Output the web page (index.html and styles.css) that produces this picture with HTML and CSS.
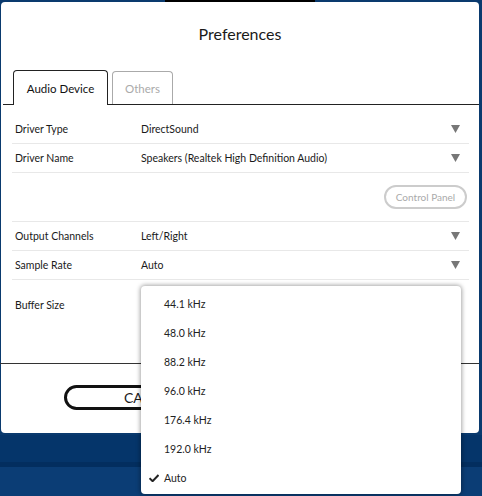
FILE: index.html
```html
<!DOCTYPE html>
<html>
<head>
<meta charset="utf-8">
<link rel="stylesheet" href="styles.css">
</head>
<body>
<div class="topbar"></div>
<div class="dialog">
  <div class="title">Preferences</div>
  <div class="tabs">
    <div class="tab active">Audio Device</div>
    <div class="tab">Others</div>
  </div>
  <div class="content">
    <div class="row">
      <div class="label">Driver Type</div>
      <div class="value">DirectSound</div>
      <svg class="arrow" width="9" height="8" viewBox="0 0 9 8"><path d="M0 0 H9 L4.5 8 Z" fill="#777"/></svg>
    </div>
    <div class="row">
      <div class="label">Driver Name</div>
      <div class="value">Speakers (Realtek High Definition Audio)</div>
      <svg class="arrow" width="9" height="8" viewBox="0 0 9 8"><path d="M0 0 H9 L4.5 8 Z" fill="#777"/></svg>
    </div>
    <div class="row cp">
      <div class="cpbtn">Control Panel</div>
    </div>
    <div class="row">
      <div class="label">Output Channels</div>
      <div class="value">Left/Right</div>
      <svg class="arrow" width="9" height="8" viewBox="0 0 9 8"><path d="M0 0 H9 L4.5 8 Z" fill="#777"/></svg>
    </div>
    <div class="row">
      <div class="label">Sample Rate</div>
      <div class="value">Auto</div>
      <svg class="arrow" width="9" height="8" viewBox="0 0 9 8"><path d="M0 0 H9 L4.5 8 Z" fill="#777"/></svg>
    </div>
    <div class="row last">
      <div class="label">Buffer Size</div>
      <div class="value"></div>
    </div>
  </div>
  <div class="footer">
    <div class="btn">CANCEL</div>
  </div>
</div>
<div class="menu">
  <div class="item">44.1 kHz</div>
  <div class="item">48.0 kHz</div>
  <div class="item">88.2 kHz</div>
  <div class="item">96.0 kHz</div>
  <div class="item">176.4 kHz</div>
  <div class="item">192.0 kHz</div>
  <div class="item checked"><svg class="check" width="10" height="8" viewBox="0 0 10 8"><path d="M0.5 4.2 L3.6 7.2 L9.5 1" fill="none" stroke="#222" stroke-width="2"/></svg>Auto</div>
</div>
</body>
</html>
```
FILE: styles.css
```css
html, body {
  margin: 0;
  padding: 0;
}
body {
  width: 482px;
  height: 496px;
  overflow: hidden;
  position: relative;
  font-family: "Lato", "Open Sans", sans-serif;
  color: #1a1a1a;
  background: linear-gradient(to bottom, #0a3a6e 0, #0a3a6e 435px, #05356a 435px, #05356a 462px, #032e5f 462px, #032e5f 467px, #0b3d75 467px, #0b3d75 496px);
}
.topbar {
  position: absolute;
  left: 165px;
  top: 0;
  width: 150px;
  height: 2px;
  background: #000;
}
.dialog {
  margin: 2px 3px 0 1px;
  height: 431px;
  background: #fff;
  border-radius: 4px;
  display: flex;
  flex-direction: column;
}
.title {
  height: 64px;
  display: flex;
  align-items: center;
  justify-content: center;
  font-size: 16px;
  padding-bottom: 2px;
  box-sizing: border-box;
  margin-bottom: 4px;
}
.tabs {
  display: flex;
  gap: 4px;
  padding-left: 10px;
  margin-left: 2px;
  border-bottom: 1px solid #222;
  height: 34px;
  align-items: flex-end;
}
.tab {
  height: 33px;
  box-sizing: border-box;
  border: 1px solid #aaa;
  border-bottom: none;
  border-radius: 4px 4px 0 0;
  width: 61px;
  font-size: 11.5px;
  color: #aaa;
  display: flex;
  align-items: center;
  justify-content: center;
  white-space: nowrap;
}
.tab.active {
  border-color: #222;
  color: #111;
  height: 35px;
  margin-bottom: -1px;
  background: #fff;
  width: 95px;
}
.content {
  padding: 10px 10px 0 11px;
  flex: 0 0 auto;
  height: 258px;
  box-sizing: border-box;
}
.row {
  height: 29px;
  box-sizing: border-box;
  display: flex;
  align-items: center;
  border-bottom: 1px solid #e8e8e8;
  font-size: 10.5px;
  padding-left: 3px;
}
.row.cp {
  height: 49px;
  justify-content: flex-end;
  padding-right: 2px;
}
.row.last {
  border-bottom: none;
  height: 50px;
}
.label {
  width: 126px;
}
.value {
  flex: 1;
}
.arrow {
  margin-right: 9px;
}
.cpbtn {
  width: 83px;
  height: 24px;
  box-sizing: border-box;
  border: 2px solid #ccc;
  border-radius: 12px;
  color: #aaa;
  font-size: 10px;
  display: flex;
  align-items: center;
  justify-content: center;
}
.footer {
  border-top: 1px solid #333;
  flex: 1;
  display: flex;
  justify-content: flex-start;
  align-items: flex-start;
  padding: 21px 0 0 64px;
  margin-left: -1px;
}
.btn {
  width: 174px;
  height: 25px;
  box-sizing: border-box;
  border: 3px solid #111;
  border-radius: 13px;
  font-size: 14px;
  display: flex;
  align-items: center;
  justify-content: center;
}
.menu {
  position: absolute;
  left: 141px;
  top: 286px;
  width: 320px;
  height: 208px;
  background: #fff;
  border-radius: 4px;
  box-shadow: 0 0 4px 1px rgba(0,0,0,0.35);
  padding-top: 3px;
  box-sizing: border-box;
}
.item {
  height: 29px;
  display: flex;
  align-items: center;
  padding-left: 23px;
  font-size: 10.5px;
  color: #222;
  position: relative;
}
.check {
  position: absolute;
  left: 8px;
  top: 11px;
}
```
